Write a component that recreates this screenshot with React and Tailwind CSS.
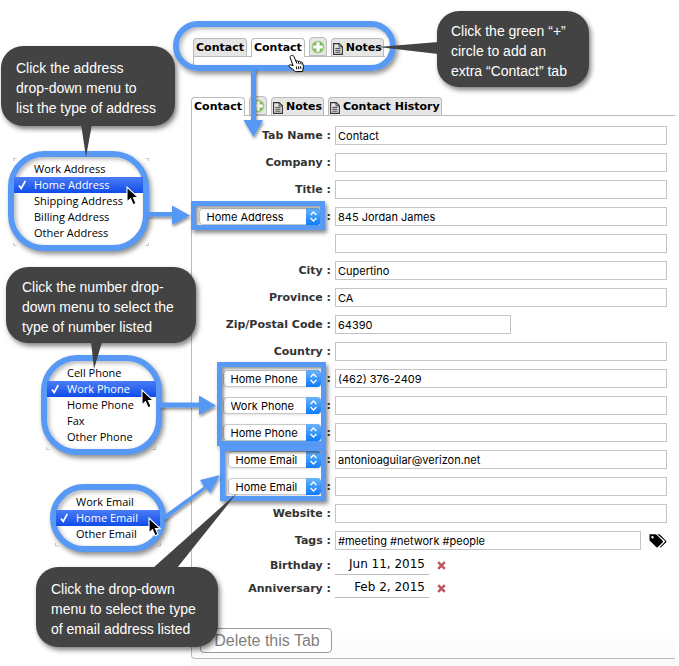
import { useState } from 'react';
import clsx from 'clsx';

const addressTypes = ['Work Address', 'Home Address', 'Shipping Address', 'Billing Address', 'Other Address'];
const phoneTypes = ['Cell Phone', 'Work Phone', 'Home Phone', 'Fax', 'Other Phone'];
const emailTypes = ['Work Email', 'Home Email', 'Other Email'];

const PlusIcon = () => (
  <svg width="14" height="14" viewBox="0 0 14 14" aria-hidden="true">
    <circle cx="7" cy="7" r="6.6" fill="#b5d6a0" />
    <circle cx="7" cy="7" r="5.6" fill="#7dba5a" />
    <path d="M5.4 2.2h3.2v3.200h3.200v3.200h-3.200v3.200H5.4v-3.200H2.200V5.400h3.200z" fill="#fff" />
  </svg>
);

const NoteIcon = () => (
  <svg width="10" height="12" viewBox="0 0 10 12" fill="none" stroke="#333" aria-hidden="true">
    <path d="M.6.6h5.6l3.2 3.2v7.6H.6z" strokeWidth="1.1" />
    <path d="M6 .6v3.3h3.4M2.3 5.4h5.2M2.3 7.3h5.2M2.3 9.2h5.2" strokeWidth=".9" />
  </svg>
);

const Tab = ({ active, note, children }) => (
  <button
    type="button"
    role="tab"
    aria-selected={!!active}
    className={clsx(
      'flex h-[19px] items-center gap-[3px] rounded-t border border-b-0 border-[#bbb] pt-px font-["DejaVu_Sans",sans-serif] text-[11px] font-bold whitespace-nowrap text-black',
      note ? 'px-px' : 'px-[2px]',
      active ? 'bg-white' : 'bg-[#e6e6e6] shadow-[inset_0_-1px_0_#bbb]'
    )}
  >
    {note && <NoteIcon />}
    {children}
  </button>
);

const AddTab = () => (
  <button
    type="button"
    aria-label="Add contact tab"
    className="mb-px flex h-[19px] w-[18px] items-center justify-center rounded-t border border-[#bbb] bg-[#e6e6e6]"
  >
    <PlusIcon />
  </button>
);

const TextField = ({ id, label, value = '', className = 'w-full' }) => (
  <input
    id={id}
    aria-label={label}
    defaultValue={value}
    className={clsx(
      'h-[19px] border border-[#c4c4c4] bg-white px-[2px] font-[Inter,sans-serif] text-[11px] text-black outline-none',
      className
    )}
  />
);

const TypeSelect = ({ label, options, value, className }) => {
  const [type, setType] = useState(value);

  return (
    <span className={clsx('relative block h-[17px]', className)}>
      <select
        aria-label={label}
        value={type}
        onChange={(e) => setType(e.target.value)}
        className="block h-full w-full appearance-none rounded border border-[#c8c8c8] bg-white pr-4 pl-[7px] font-[Inter,sans-serif] text-[11px] font-normal text-black shadow-sm outline-none"
      >
        {options.map((option) => (
          <option key={option}>{option}</option>
        ))}
      </select>
      <svg className="pointer-events-none absolute top-0 right-0" width="15" height="17" viewBox="0 0 15 17">
        <defs>
          <linearGradient id="selectCap" x2="0" y2="1">
            <stop offset="0" stopColor="#6cb4fa" />
            <stop offset="1" stopColor="#0f7bfa" />
          </linearGradient>
        </defs>
        <path d="M0 0h11a4 4 0 0 1 4 4v9a4 4 0 0 1-4 4H0z" fill="url(#selectCap)" />
        <path d="M4.6 7l2.9-3 2.9 3M4.6 10l2.9 3 2.9-3" fill="none" stroke="#fff" strokeWidth="1.3" />
      </svg>
    </span>
  );
};

const labelClass = 'flex w-[139px] shrink-0 items-center justify-end gap-[6px] font-["DejaVu_Sans",sans-serif] text-[11px] font-bold whitespace-nowrap text-[#333]';

const Row = ({ id, label, value, inputClass, children }) => (
  <div className="flex h-[19px] items-center gap-1">
    <label htmlFor={id} className={clsx(labelClass, 'pt-[2px]')}>
      {label && `${label} :`}
    </label>
    <TextField id={id} label={label ? undefined : 'Address line 2'} value={value} className={inputClass} />
    {children}
  </div>
);

const SelectRow = ({ label, options, type, selectClass, value }) => (
  <div className="flex h-[19px] items-center gap-1">
    <div className={labelClass}>
      <TypeSelect label={`${label} type`} options={options} value={type} className={selectClass} />
      <span className="pt-[2px]">:</span>
    </div>
    <TextField label={label} value={value} />
  </div>
);

const DateRow = ({ id, label, value }) => (
  <div className="flex h-[23px] items-start gap-1">
    <label htmlFor={id} className={clsx(labelClass, 'h-full')}>{`${label} :`}</label>
    <input
      id={id}
      defaultValue={value}
      className="h-5 w-[94px] border-b border-[#bbb] bg-transparent pr-1 pb-[2px] text-right font-['DejaVu_Sans',sans-serif] text-xs text-black outline-none"
    />
    <button type="button" aria-label={`Clear ${label}`} className="ml-1 flex h-5 items-center">
      <svg width="9" height="9" viewBox="0 0 9 9" aria-hidden="true">
        <path d="M1.2 1.2l6.6 6.6M7.8 1.2L1.2 7.8" stroke="#bd5560" strokeWidth="2.5" />
      </svg>
    </button>
  </div>
);

const TagsIcon = () => (
  <svg width="18" height="16" viewBox="0 0 18 16" aria-hidden="true">
    <path
      fillRule="evenodd"
      d="M1 1.2h5.3c.5 0 .9.2 1.3.5l6 6c.5.5.5 1.2 0 1.7l-4.700 4.700c-.5.5-1.200.5-1.700 0L1.100 8.100C.7 7.700.5 7.300.5 6.800V1.700c0-.3.200-.5.500-.500zM3.500 3a1.200 1.200 0 1 0 0 2.400 1.200 1.200 0 0 0 0-2.400z"
    />
    <path d="M8.300 1.200h1.500c.5 0 .9.200 1.300.5l5.900 6c.5.500.5 1.200 0 1.700l-4.700 4.700c-.5.500-1.100.500-1.600.100l4.900-5c.5-.5.500-1.100 0-1.600z" />
  </svg>
);

const Callout = ({ className, children }) => (
  <p
    className={clsx(
      "absolute rounded-[22px] bg-[#434343] font-['Liberation_Sans',Arial,sans-serif] text-sm leading-5 whitespace-pre-line text-white shadow-[2px_3px_5px_rgba(0,0,0,0.5)]",
      className
    )}
  >
    {children}
  </p>
);

const TypeMenu = ({ label, options, selected, className }) => (
  <ul
    role="listbox"
    aria-label={label}
    className={clsx(
      "absolute rounded-[36px] border-[6px] border-[#5799f5] bg-white py-1 font-['Open_Sans','Noto_Sans',sans-serif] text-[11px] leading-4 text-black shadow-[2px_3px_5px_rgba(0,0,0,0.45),inset_2px_2px_4px_rgba(0,0,0,0.3)]",
      className
    )}
  >
    {options.map((option) => (
      <li
        key={option}
        role="option"
        aria-selected={option === selected}
        className={clsx(
          'flex h-4 items-center font-medium whitespace-nowrap',
          option === selected && 'bg-linear-to-b from-[#4a7cf5] to-[#0d4be8] text-white'
        )}
      >
        <span className="w-5 shrink-0 pl-1">
          {option === selected && (
            <svg width="9" height="10" viewBox="0 0 9 10" aria-hidden="true">
              <path d="M1 5.600l2.200 2.900L7.300 1" fill="none" stroke="#fff" strokeWidth="1.700" />
            </svg>
          )}
        </span>
        {option}
      </li>
    ))}
  </ul>
);

const Frame = ({ className }) => (
  <div
    className={clsx(
      'absolute border-[5px] border-[#5799f5] shadow-[2px_3px_4px_rgba(0,0,0,0.45),inset_2px_2px_3px_rgba(0,0,0,0.4)]',
      className
    )}
  />
);

const Pointer = ({ x, y }) => (
  <path
    transform={`translate(${x} ${y})`}
    d="M0 0v15l3.500-3.300 2.600 6 2.900-1.300-2.600-5.800h4.900z"
    fill="#000"
    stroke="#fff"
    strokeWidth="1.100"
  />
);

const App = () => (
  <div className="relative min-h-screen overflow-hidden bg-white">
    <main className="ml-[191px] pt-[37px]">
      <div className="ml-[2px] w-[192px]">
        <div role="tablist" aria-label="Tabs after adding a contact" className="relative z-10 flex items-end gap-1">
          <Tab>Contact</Tab>
          <Tab active>Contact</Tab>
          <AddTab />
          <Tab note>Notes</Tab>
        </div>
        <div className="-mt-px h-[9px] border-t border-l border-[#bbb]" />
      </div>

      <div role="tablist" aria-label="Contact tabs" className="relative z-10 mt-[31px] flex items-end gap-1">
        <Tab active>Contact</Tab>
        <AddTab />
        <Tab note>Notes</Tab>
        <Tab note>Contact History</Tab>
      </div>

      <form
        onSubmit={(e) => e.preventDefault()}
        className="-mt-px mr-1 rounded-bl border border-r-0 border-[#bbb] bg-linear-to-b from-white from-95% to-[#fafafa] pt-[10px] pb-[5px]"
      >
        <div className="flex flex-col gap-2 pr-2">
          <Row id="tabName" label="Tab Name" value="Contact" />
          <Row id="company" label="Company" />
          <Row id="title" label="Title" />
          <SelectRow label="Address" options={addressTypes} type="Home Address" selectClass="w-[122px]" value="845 Jordan James" />
          <Row id="address2" />
          <Row id="city" label="City" value="Cupertino" />
          <Row id="province" label="Province" value="CA" />
          <Row id="zip" label="Zip/Postal Code" value="64390" inputClass="w-44" />
          <Row id="country" label="Country" />
          <SelectRow label="Phone 1" options={phoneTypes} type="Home Phone" selectClass="w-[98px]" value="(462) 376-2409" />
          <SelectRow label="Phone 2" options={phoneTypes} type="Work Phone" selectClass="w-[98px]" />
          <SelectRow label="Phone 3" options={phoneTypes} type="Home Phone" selectClass="w-[98px]" />
          <SelectRow label="Email 1" options={emailTypes} type="Home Email" selectClass="w-[93px]" value="antonioaguilar@verizon.net" />
          <SelectRow label="Email 2" options={emailTypes} type="Home Email" selectClass="w-[93px]" />
          <Row id="website" label="Website" />
          <Row id="tags" label="Tags" value="#meeting #network #people" inputClass="min-w-0 grow">
            <button type="button" aria-label="Choose tags" className="ml-1 shrink-0">
              <TagsIcon />
            </button>
          </Row>
        </div>
        <div className="pt-[5px]">
          <DateRow id="birthday" label="Birthday" value="Jun 11, 2015" />
          <DateRow id="anniversary" label="Anniversary" value="Feb 2, 2015" />
        </div>
        <button
          type="button"
          className="mt-[27px] ml-2 block h-[25px] w-[132px] rounded border border-[#999] bg-white pl-[2px] font-['Liberation_Sans',Arial,sans-serif] text-base leading-5 text-[#808080]"
        >
          Delete this Tab
        </button>
      </form>
      <div className="h-2 bg-[#fafafa]" />
    </main>

    {/* annotations drawn over the form */}
    <div className="pointer-events-none absolute inset-0 z-20">
      <div className="absolute top-[21px] left-[173px] h-[50px] w-[223px] rounded-full border-[6px] border-[#5799f5] shadow-[2px_3px_5px_rgba(0,0,0,0.45),inset_2px_2px_4px_rgba(0,0,0,0.3)]" />
      <Frame className="top-[201px] left-[191px] h-[29px] w-[134px]" />
      <Frame className="top-[362px] left-[217px] h-[84px] w-[109px]" />
      <Frame className="top-[446px] left-[220px] h-[55px] w-[106px]" />

      <svg className="absolute top-0 left-0" width="679" height="666" viewBox="0 0 679 666" aria-hidden="true">
        <path
          d="M13.500 161v-2.500h3M148.500 161v-2.500h-3M13.500 243v2.500h3M148.500 243v2.500h-3M46.500 447v2.500h3M155.500 447v2.500h-3M55.500 543v3h3M160.500 543v3h-3"
          fill="none"
          stroke="#c4c4c4"
        />
      </svg>

      <TypeMenu
        label="Address types"
        options={addressTypes}
        selected="Home Address"
        className="top-[151px] left-2 w-[141px]"
      />
      <TypeMenu
        label="Phone types"
        options={phoneTypes}
        selected="Work Phone"
        className="top-[355px] left-[41px] w-[121px]"
      />
      <TypeMenu
        label="Email types"
        options={emailTypes}
        selected="Home Email"
        className="top-[484px] left-[50px] w-[116px]"
      />

      <Callout className="top-[46px] left-px w-[174px] px-[15px] pt-3 pb-2">
        {'Click the address\ndrop-down menu to\nlist the type of address'}
      </Callout>
      <Callout className="top-[11px] left-[437px] w-[152px] px-[14px] pt-[10px] pb-[6px]">
        {'Click the green “+”\ncircle to add an\nextra “Contact” tab'}
      </Callout>
      <Callout className="top-[267px] left-[6px] w-[190px] px-4 pt-[10px] pb-[6px]">
        {'Click the number drop-\ndown menu to select the\ntype of number listed'}
      </Callout>
      <Callout className="top-[567px] left-9 w-[182px] px-[15px] pt-3 pb-2">
        {'Click the drop-down\nmenu to select the type\nof email address listed'}
      </Callout>

      <svg className="absolute top-0 left-0" width="679" height="666" viewBox="0 0 679 666" aria-hidden="true">
        <defs>
          <filter id="softShadow" x="-20%" y="-20%" width="150%" height="150%">
            <feDropShadow dx="1" dy="2" stdDeviation="1.500" floodOpacity=".45" />
          </filter>
        </defs>
        <g fill="#5799f5" filter="url(#softShadow)">
          <path d="M251 69h5v51h7l-9.500 17-10-17h7.500z" />
          <path d="M148 212h24v-6.500l18 10-18 9.500v-8.500h-24z" />
          <path d="M160 402.500h39v-7l17 10-17 9.500v-7.500h-39z" />
          <path d="M163 516l41-29.500-4-6.500 20-5-10 18-3.500-4.500L165 520z" />
        </g>
        <g fill="#434343">
          <path d="M81 124h11l-6 33z" />
          <path d="M91 342h11l-8 27z" />
          <path d="M438 42v12l-60-7z" />
          <path d="M153 568h24l60-75z" />
        </g>
        <Pointer x={127} y={187} />
        <Pointer x={142} y={390} />
        <Pointer x={149} y={518} />
        <g fill="#fff" stroke="#000" strokeWidth="1" strokeLinejoin="round">
          <path d="M291.500 55.500c1-.5 2 0 2.400 1l2 4.600c.8-.6 1.900-.4 2.300.5.800-.6 1.900-.4 2.300.5.900-.5 1.900 0 2.100 1l.9 3.500-.9 4.900-7.400.200c-1.300-1.900-3.500-3.200-5.900-4.900-1.100-1 .1-2.500 1.500-2l2.300 1-2.900-8.200c-.4-1 .3-1.900 1.300-2.100z" />
          <path d="M295.900 61l1 2.600M298.200 61.600l.9 2.500M300.500 62.200l.8 2.200M296.500 66.500l.3 2.800M298.500 66.300l.3 2.800M300.500 66.100l.3 2.800" fill="none" />
        </g>
      </svg>
    </div>
  </div>
);

export default App;
